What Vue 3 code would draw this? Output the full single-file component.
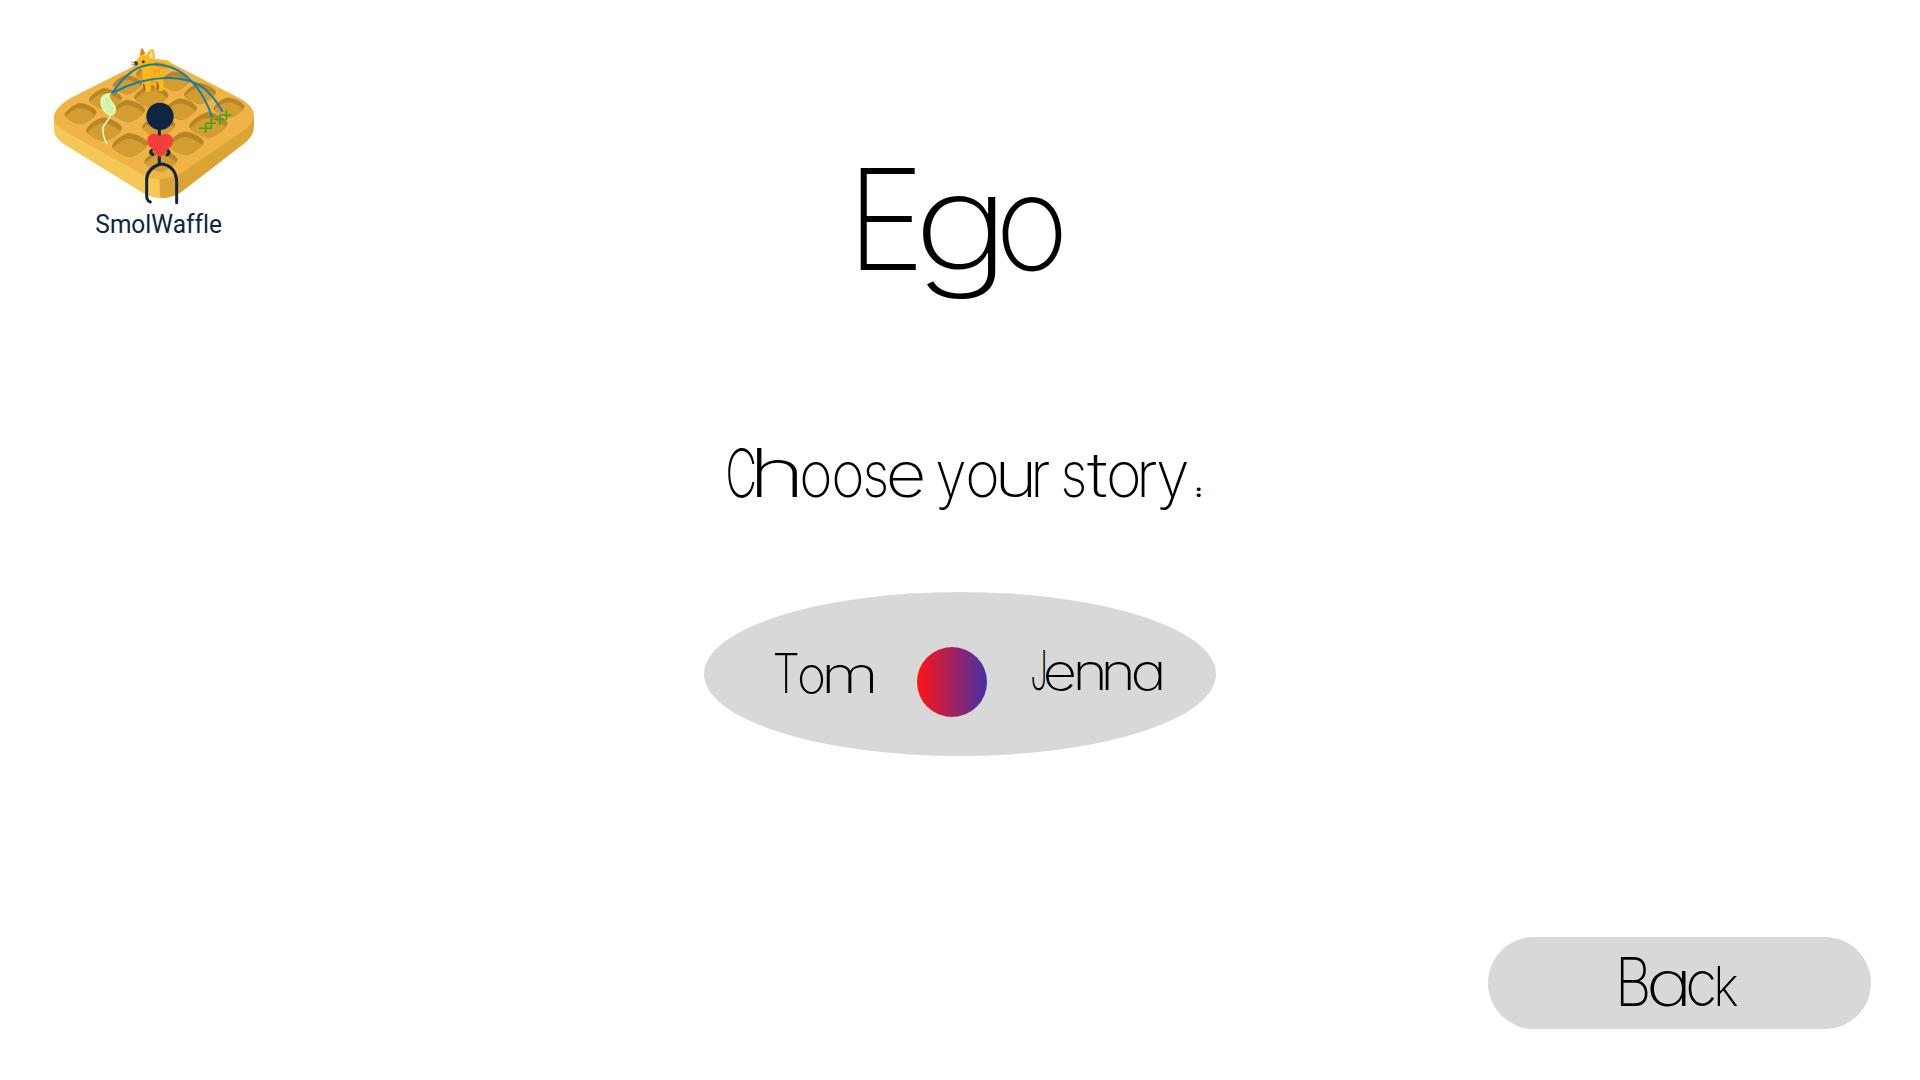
<script setup>
// Every glyph is listed as [character, left edge, ink width] inside its own canvas.
const ctx = document.createElement('canvas').getContext('2d')

// Lowercase letters sit a little lower than the typeface's own x-height.
const shrink = { g: 0.96, k: 0.82, t: 0.93, h: 1, ':': 0.26 }

function fit(glyphs, size) {
  return glyphs.map(([ch, left, width]) => {
    if (ch === ' ') return { ch }
    const lower = ch === ch.toLowerCase()
    const fontSize = size * (shrink[ch] ?? (lower ? 0.94 : 1))
    const weight = ch === ':' ? 900 : 200
    ctx.font = `${weight} ${fontSize}px Inter`
    const m = ctx.measureText(ch)
    const k = width / (m.actualBoundingBoxRight + m.actualBoundingBoxLeft)
    return {
      ch,
      x: left + m.actualBoundingBoxLeft * k,
      length: m.width * k,
      size: fontSize,
      weight,
    }
  })
}

const title = fit([['E', 20, 56], ['g', 82, 74], ['o', 162, 60]], 140)
const prompt = fit([
  ['C', 18, 27], ['h', 47, 41], ['o', 92, 28], ['o', 124, 28], ['s', 155, 21], ['e', 179, 34], [' '],
  ['y', 227, 28], ['o', 258, 29], ['u', 290, 32], ['r', 325, 14], [' '],
  ['s', 353, 21], ['t', 377, 20], ['o', 399, 30], ['r', 431, 15], ['y', 448, 30], [':', 486, 4.5],
], 67)
const tom = fit([['T', 5, 23], ['o', 30, 24], ['m', 56, 48]], 55)
const jenna = fit([['J', 2, 13], ['e', 16, 28], ['n', 47, 26], ['n', 75, 26], ['a', 103, 29]], 55)
const back = fit([['B', 11, 27], ['a', 40, 36], ['c', 78, 26], ['k', 107, 21]], 67)

const hole = 'M-49 4C-49-6-22-27-6-31C8-34 47-17 49-3C50 8 17 31 2 33C-13 34-49 14-49 4Z'
const holes = [
  [330, 130, 0.85], [405, 153, 0.92], [480, 190, 0.98], [567, 232, 0.95],
  [262, 163, 0.9], [334, 198, 1.05], [422, 237, 1], [505, 284, 1.18],
  [196, 206, 1], [265, 242, 1.03], [356, 287, 1.02], [437, 339, 1.1],
  [122, 250, 0.98], [192, 297, 1.1], [270, 344, 1.1], [363, 391, 1.02],
]
</script>

<template>
  <main class="page">
    <header class="top">
      <svg class="logo" viewBox="0 0 690 660" role="img" aria-label="SmolWaffle">
        <defs>
          <clipPath id="hole"><path :d="hole" /></clipPath>
        </defs>
        <path fill="#f5c757" d="M42 262V298C43 321 59 335 82 349L309 489C328 500 343 504 362 504L380 420Z" />
        <path fill="#dca335" d="M358 440L361 504C388 504 405 498 425 485L606 346C633 325 642 311 642 285V255L520 300Z" />
        <path fill="#efb445" d="M42 262C42 240 65 219 98 201L300 99C330 84 360 82 392 98L592 201C622 216 642 236 642 257C642 277 624 292 604 307L431 424C400 448 344 454 309 434L80 307C57 294 42 283 42 262Z" />
        <g v-for="(h, i) in holes" :key="i" :transform="`translate(${h[0]} ${h[1]}) scale(${h[2]})`">
          <path :d="hole" fill="#b78628" />
          <g clip-path="url(#hole)">
            <path :d="hole" fill="#d39d31" transform="translate(-2 15)" />
          </g>
        </g>

        <g stroke-linecap="round" stroke-linejoin="round">
          <path fill="#f57c12" d="M300 79L302 58L307 55L317 72Z" />
          <path fill="#fdb813" d="M319 76C323 66 328 59 338 56C344 66 346 77 343 91C350 98 366 95 376 90C386 88 393 99 391 107C389 115 378 117 371 116L371 177Q370 184 362 184H348Q343 182 345 172V151L333 150V181Q331 187 322 186Q311 187 311 178L306 119C292 112 286 103 289 94C293 81 305 75 319 76Z" />
          <path fill="#fddcae" d="M326 80Q330 65 336 63Q341 77 336 88Z" />
          <path fill="#df982d" d="M344 93Q357 99 373 99L385 116Q365 118 347 109Z" />
          <path fill="#f79a32" d="M340 117h8v14h-8zM351 117h7v14h-7z" />
          <path fill="#bd5c3a" d="M309 158Q319 165 316 184Q307 181 309 158ZM347 153Q359 158 357 176Q355 184 347 181Q353 165 347 153Z" />
          <circle cx="310" cy="95" r="4.5" fill="#263136" />
          <path fill="#343532" d="M284 93Q291 92 294 98Q294 105 288 108L283 102Z" />
          <path d="M276 96L285 99M275 103H286M280 110L287 104" fill="none" stroke="#56524b" stroke-width="2" />
        </g>

        <g fill="none" stroke="#117fa7" stroke-width="6">
          <path d="M217 189C254 134 290 104 347 103C434 107 488 178 517 262" />
          <path d="M217 189C263 164 317 144 384 143C466 145 505 171 548 245" />
        </g>
        <path fill="#dcf8b2" d="M213 189C203 202 217 211 226 228C234 244 222 260 208 257C193 250 180 235 181 211C184 193 198 189 213 189Z" />
        <path fill="none" stroke="#dcf8b2" stroke-width="5" stroke-linecap="round" d="M211 256C208 272 192 279 189 294C186 313 193 327 200 341" />
        <path fill="none" stroke="#b4d477" stroke-width="1.5" d="M190 210Q191 230 200 238M198 204Q196 223 209 241M205 202Q201 221 216 237M197 243L219 248M212 246Q221 241 217 230" />
        <path fill="none" stroke="#37a327" stroke-width="4.6" d="M477 295H516M497 280V308M498 280H528M514 267V296M525 268H553M540 253V284M544 256H574M559 242V270" />

        <g fill="none" stroke="#102541" stroke-linecap="round" stroke-linejoin="round">
          <path stroke-width="9" stroke-linecap="butt" d="M358 290V402" />
          <path stroke-width="9" d="M331 516C318 511 320 499 320 486V449C320 424 339 410 360 402C393 402 409 427 410 455V518" />
          <path stroke-width="10" d="M334 362Q329 369 338 373M384 362Q391 369 382 374" />
        </g>
        <circle cx="360" cy="259" r="41" fill="#102541" />
        <path fill="#f33e3d" d="M360 381C350 375 343 362 329 350C316 335 321 313 340 311Q353 310 360 318Q368 310 381 311C399 314 405 335 392 350C377 363 370 376 360 381Z" />
        <text class="brand" x="166" y="608" textLength="380" lengthAdjust="spacingAndGlyphs">SmolWaffle</text>
      </svg>
      <h1 class="title">
        <svg width="240" height="190">
          <text y="119.5"><tspan v-for="(g, i) in title" :key="i" :x="g.x" :textLength="g.length" lengthAdjust="spacingAndGlyphs" :font-size="g.size" :font-weight="g.weight">{{ g.ch }}</tspan></text>
        </svg>
      </h1>
    </header>

    <h2 class="prompt">
      <svg width="510" height="100">
        <text y="67"><tspan v-for="(g, i) in prompt" :key="i" :x="g.x" :textLength="g.length" lengthAdjust="spacingAndGlyphs" :font-size="g.size" :font-weight="g.weight">{{ g.ch }}</tspan></text>
      </svg>
    </h2>

    <section class="choice">
      <button class="name tom">
        <svg width="110" height="80">
          <text y="53"><tspan v-for="(g, i) in tom" :key="i" :x="g.x" :textLength="g.length" lengthAdjust="spacingAndGlyphs" :font-size="g.size" :font-weight="g.weight">{{ g.ch }}</tspan></text>
        </svg>
      </button>
      <span class="orb"></span>
      <button class="name jenna">
        <svg width="140" height="80">
          <text y="50"><tspan v-for="(g, i) in jenna" :key="i" :x="g.x" :textLength="g.length" lengthAdjust="spacingAndGlyphs" :font-size="g.size" :font-weight="g.weight">{{ g.ch }}</tspan></text>
        </svg>
      </button>
    </section>

    <footer class="bottom">
      <button class="back">
        <svg width="140" height="92">
          <text y="69"><tspan v-for="(g, i) in back" :key="i" :x="g.x" :textLength="g.length" lengthAdjust="spacingAndGlyphs" :font-size="g.size" :font-weight="g.weight">{{ g.ch }}</tspan></text>
        </svg>
      </button>
    </footer>
  </main>
</template>

<style>
body {
  margin: 0;
  background: #fff;
}
</style>

<style scoped>
.page {
  box-sizing: border-box;
  width: 1920px;
  height: 1080px;
  display: flex;
  flex-direction: column;
  background: #fff;
  color: #000;
  font-family: Inter, "Liberation Sans", sans-serif;
  overflow: hidden;
}
svg {
  display: block;
  overflow: visible;
  font-feature-settings: "cv11";
}
button {
  border: 0;
  padding: 0;
  background: none;
  color: inherit;
  font-family: inherit;
  cursor: pointer;
}
.top {
  display: flex;
  height: 340px;
  padding: 30px 40px 0;
  box-sizing: border-box;
}
.logo {
  width: 230px;
  height: 220px;
}
.brand {
  font-family: Roboto, sans-serif;
  font-size: 78px;
  font-weight: 400;
  font-variant-ligatures: none;
  fill: #102541;
}
.title {
  margin: 120px 0 0 570px;
}
.prompt {
  margin: 90px 0 0 710px;
}
.choice {
  display: flex;
  align-items: flex-start;
  box-sizing: border-box;
  width: 512px;
  height: 164px;
  margin: 62px auto 0;
  padding-left: 66px;
  border-radius: 50%;
  background: #d8d8d8;
}
.tom {
  margin-top: 48px;
}
.orb {
  width: 70px;
  height: 70px;
  margin: 55px 43px 0 37px;
  border-radius: 50%;
  background: linear-gradient(90deg, #ff1414, #4630a8);
}
.jenna {
  margin-top: 48px;
}
.bottom {
  display: flex;
  justify-content: flex-end;
  margin-top: auto;
  padding: 0 49px 51px 0;
}
.back {
  display: flex;
  width: 383px;
  height: 92px;
  padding-left: 122px;
  border-radius: 46px;
  background: #d8d8d8;
}
</style>
